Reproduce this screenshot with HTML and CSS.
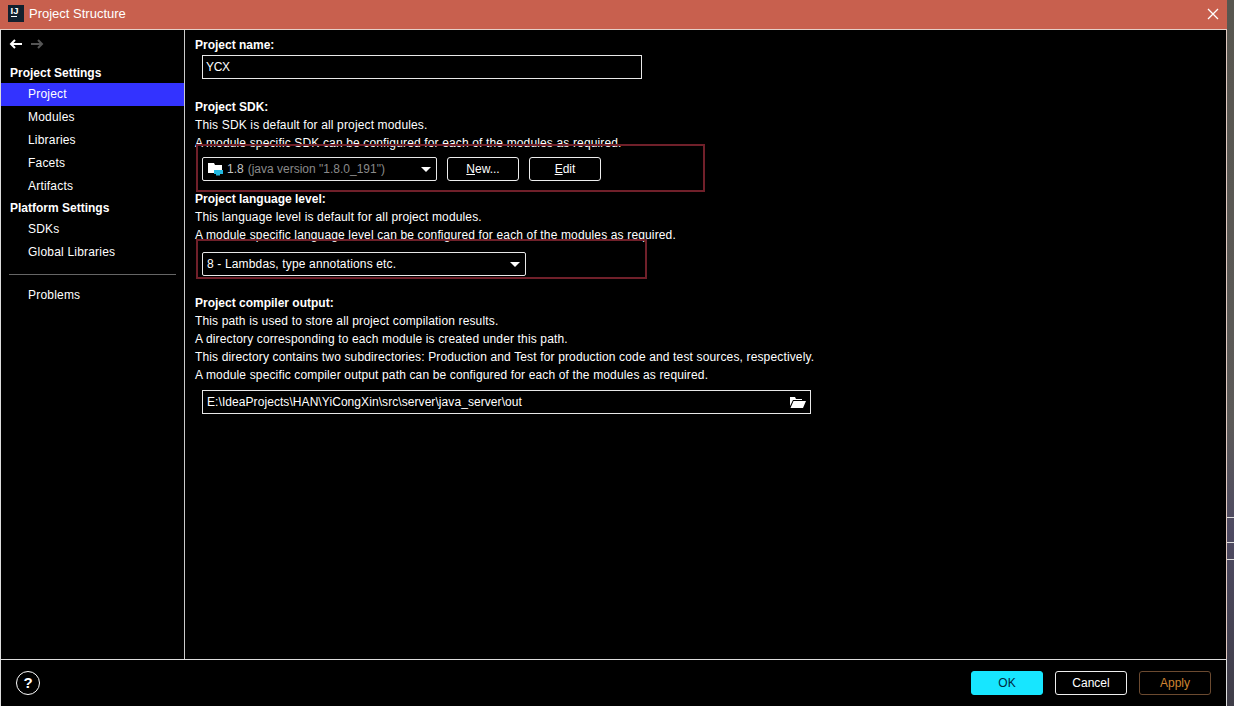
FILE: index.html
```html
<!DOCTYPE html>
<html lang="en">
<head>
<meta charset="utf-8">
<title>Project Structure</title>
<link rel="stylesheet" href="styles.css">
</head>
<body>
<div class="desktop">
  <div class="window">
    <header class="titlebar">
      <svg class="app-icon" width="16" height="17" viewBox="0 0 16 17"><rect width="16" height="17" fill="#12202e"/><rect x="3" y="11" width="6" height="1" fill="#fff"/><text x="2.500" y="9" class="app-icon-text">IJ</text></svg>
      <span class="title">Project Structure</span>
      <svg class="close" width="12" height="12" viewBox="0 0 12 12"><path d="M1 1l10 10M11 1L1 11" stroke="#fff" stroke-width="1.300" fill="none"/></svg>
    </header>
    <div class="body">
      <nav class="sidebar">
        <div class="history">
          <svg width="14" height="10" viewBox="0 0 14 10"><path d="M13 5H2M6 1L2 5l4 4" stroke="#fff" stroke-width="2" fill="none"/></svg>
          <svg width="14" height="10" viewBox="0 0 14 10"><path d="M1 5h11M8 1l4 4-4 4" stroke="#555" stroke-width="2" fill="none"/></svg>
        </div>
        <div class="nav-head">Project Settings</div>
        <div class="nav-item selected">Project</div>
        <div class="nav-item">Modules</div>
        <div class="nav-item">Libraries</div>
        <div class="nav-item">Facets</div>
        <div class="nav-item">Artifacts</div>
        <div class="nav-head platform">Platform Settings</div>
        <div class="nav-item">SDKs</div>
        <div class="nav-item">Global Libraries</div>
        <div class="nav-sep"></div>
        <div class="nav-item">Problems</div>
      </nav>
      <main class="content">
        <div class="label">Project name:</div>
        <div class="field name-field">YCX</div>

        <div class="label sdk-label">Project SDK:</div>
        <div class="line">This SDK is default for all project modules.</div>
        <div class="line">A module specific SDK can be configured for each of the modules as required.</div>
        <div class="row sdk-row">
          <div class="field combo sdk-combo">
            <svg class="sdk-icon" width="16" height="14" viewBox="0 0 16 14"><path d="M0 1h6l1 2h7v8H0z" fill="#fff"/><rect x="6" y="8" width="9" height="4" fill="#22b8e0"/><rect x="8" y="12" width="4" height="1.500" fill="#22b8e0"/></svg>
            <span class="sdk-version">1.8</span><span class="muted">(java version "1.8.0_191")</span>
            <i class="caret"></i>
          </div>
          <button class="btn"><u>N</u>ew...</button>
          <button class="btn"><u>E</u>dit</button>
        </div>

        <div class="label lang-label">Project language level:</div>
        <div class="line">This language level is default for all project modules.</div>
        <div class="line">A module specific language level can be configured for each of the modules as required.</div>
        <div class="field combo lang-combo"><span>8 - Lambdas, type annotations etc.</span><i class="caret"></i></div>

        <div class="label out-label">Project compiler output:</div>
        <div class="line">This path is used to store all project compilation results.</div>
        <div class="line">A directory corresponding to each module is created under this path.</div>
        <div class="line">This directory contains two subdirectories: Production and Test for production code and test sources, respectively.</div>
        <div class="line">A module specific compiler output path can be configured for each of the modules as required.</div>
        <div class="field combo out-field">
          <span>E:\IdeaProjects\HAN\YiCongXin\src\server\java_server\out</span>
          <svg class="folder" width="16" height="12" viewBox="0 0 16 12"><path d="M0 1h5l1 2h6v1H3L0 10zM3.500 5H16l-3 7H0.500z" fill="#fff"/></svg>
        </div>
        <div class="annot annot-sdk"></div>
        <div class="annot annot-lang"></div>
      </main>
    </div>
    <footer class="footer">
      <div class="help">?</div>
      <div class="actions">
        <button class="btn primary">OK</button>
        <button class="btn">Cancel</button>
        <button class="btn disabled">Apply</button>
      </div>
    </footer>
  </div>
  <div class="edge"><i></i><i></i><i></i></div>
</div>
</body>
</html>
```
FILE: styles.css
```css
* { box-sizing: border-box; }
html, body { margin: 0; height: 100%; background: #000; }
body { font: 12px/18px "Liberation Sans", Arial, sans-serif; color: #fff; overflow: hidden; }
.desktop { width: 1234px; height: 706px; display: flex; background: #c8604e; }
.window { width: 1227px; height: 706px; display: flex; flex-direction: column; }
.titlebar { height: 30px; flex: none; display: flex; align-items: center; padding: 0 9px 2px 8px; background: #c8604e; border-bottom: 1px solid #e6cfc8; }
.app-icon-text { font: bold 9.500px "Liberation Sans", Arial, sans-serif; fill: #fff; }
.title { margin-left: 5px; color: #fff; font-size: 13px; flex: 1; }
.close { margin-right: -1px; }
.body { flex: 1; display: flex; min-height: 0; background: #000; border-left: 1px solid #ddd; border-right: 1px solid #e0c8c0; }
.sidebar { width: 184px; flex: none; border-right: 1px solid #ccc; display: flex; flex-direction: column; }
.history { height: 31px; display: flex; align-items: center; gap: 7px; padding: 0 0 3px 8px; }
.nav-head { height: 22px; padding: 3px 0 0 9px; font-weight: bold; line-height: 18px; }
.nav-head.platform { height: 20px; padding-top: 0; line-height: 20px; }
.nav-item { height: 23px; padding: 1px 0 0 27px; line-height: 20px; letter-spacing: .2px; }
.nav-item.selected { background: #3333ff; }
.nav-sep { height: 1px; margin: 10px 8px 9px; background: #666; }
.content { flex: 1; position: relative; padding: 6px 0 0 10px; }
.label { font-weight: bold; height: 18px; }
.line { height: 18px; letter-spacing: .145px; }
.field { border: 1px solid #e8e8e8; height: 24px; margin-left: 7px; padding: 0 4px; line-height: 22px; display: flex; align-items: center; letter-spacing: .07px; }
.name-field { width: 440px; margin-top: 1px; padding-left: 3px; letter-spacing: -.3px; }
.sdk-label { margin-top: 19px; }
.lang-label { margin-top: 9px; }
.out-label { margin-top: 18px; }
.row { display: flex; gap: 10px; margin: 5px 0 0 7px; }
.combo { border-radius: 2px; position: relative; }
.sdk-row .field { margin-left: 0; }
.sdk-combo { width: 235px; gap: 3px; letter-spacing: 0; }
.sdk-icon { margin-left: 1px; }
.sdk-version { color: #c4c4c4; margin-right: 1px; }
.muted { color: #8a8a8a; }
.lang-combo { width: 324px; margin-top: 8px; letter-spacing: .15px; }
.out-field { width: 609px; margin-top: 6px; justify-content: space-between; border-radius: 0; }
.folder { margin-right: 0; }
.caret { position: absolute; right: 5px; top: 9px; width: 0; height: 0; border: 5px solid transparent; border-top: 5px solid #fff; border-bottom: 0; }
.btn { width: 72px; height: 24px; padding: 0; background: #000; color: #fff; border: 1px solid #eee; border-radius: 3px; font: 12px "Liberation Sans", Arial, sans-serif; }
.annot { position: absolute; border: 2px solid #70202a; pointer-events: none; }
.annot-sdk { left: 11px; top: 114px; width: 509px; height: 48px; }
.annot-lang { left: 11px; top: 209px; width: 451px; height: 40px; }
.footer { height: 47px; flex: none; display: flex; justify-content: space-between; align-items: center; background: #000; border: 1px solid #ddd; border-width: 1px 1px 0; padding: 0 15px 0 15px; }
.help { width: 24px; height: 24px; border: 1px solid #fff; border-radius: 50%; font-weight: bold; font-size: 15px; line-height: 22px; text-align: center; }
.actions { display: flex; gap: 12px; }
.btn.primary { background: #17e6ff; color: #00293f; border-color: #17e6ff; }
.btn.disabled { color: #cf8430; border-color: #6b4a30; }
.edge { flex: 1; display: flex; flex-direction: column; gap: 24px; padding-top: 517px; background: linear-gradient(#58564f, #5c5a58 60%, #4e4a62 75%, #3f3d48); }
.edge i { display: block; height: 1px; background: #ddd; }
.edge i:last-child { margin-top: -8px; }
```
